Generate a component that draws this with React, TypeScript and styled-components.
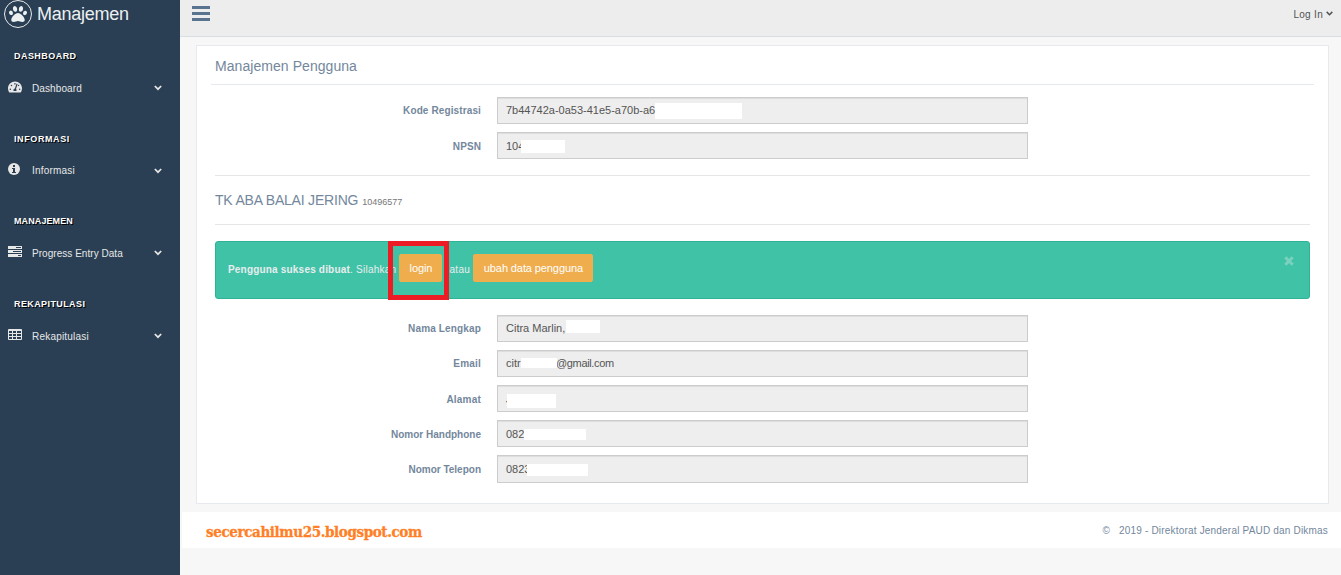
import React from "react";
import styled, { createGlobalStyle } from "styled-components";
import { FaPaw, FaTachometerAlt } from "react-icons/fa";

const GlobalStyle = createGlobalStyle`
  *, *::after { box-sizing: border-box; }
  body {
    margin: 0;
    background: #f7f7f7;
    color: #73879c;
    font-family: "Liberation Sans", Arial, sans-serif;
    font-size: 10px;
  }
`;

const Page = styled.div`
  display: flex;
  height: 575px;
  overflow: hidden;
`;

const Sidebar = styled.aside`
  flex: 0 0 180px;
  background: #2a3f54;
`;

const Brand = styled.div`
  display: flex;
  align-items: center;
  gap: 5px;
  height: 27px;
  padding-left: 4px;
  color: #ecf0f1;
  font-size: 18px;
  letter-spacing: -0.25px;
  white-space: nowrap;
`;

const BrandName = styled.span`
  padding-top: 1px;
`;

const BrandBadge = styled.span`
  display: flex;
  align-items: center;
  justify-content: center;
  width: 28px;
  height: 28px;
  border: 1px solid #eaeaea;
  border-radius: 50%;
  font-size: 18px;
`;

const Menu = styled.nav`
  padding-top: 21px;
`;

const MenuSection = styled.section`
  height: 82.7px;
`;

const MenuHeading = styled.h3<{ $tracking: number }>`
  margin: 0;
  padding: 1px 0 0 14px;
  height: 15px;
  line-height: 15px;
  font-size: 9px;
  font-weight: bold;
  color: #fff;
  letter-spacing: ${(p) => p.$tracking}px;
  text-shadow: 1px 1px #000;
`;

const MenuItem = styled.a<{ $tracking: number }>`
  display: flex;
  align-items: center;
  height: 34px;
  padding: 0 18px 0 8px;
  margin-top: 8px;
  color: #e7e7e7;
  letter-spacing: ${(p) => p.$tracking}px;
`;

const MenuIcon = styled.span`
  display: flex;
  width: 24px;
  margin-top: -3px;
  font-size: 14px;
`;

const MenuText = styled.span`
  flex: 1;
`;

const Main = styled.main`
  flex: 1;
  min-width: 0;
`;

const TopBar = styled.header`
  display: flex;
  justify-content: space-between;
  height: 37px;
  padding: 6px 8px 0 12px;
  background: #ededed;
  border-bottom: 1px solid #d9dee4;
`;

const Burger = styled.div`
  display: flex;
  flex-direction: column;
  gap: 3px;
  width: 18px;
  & > span { height: 3px; background: #5a738e; }
`;

const LoginMenu = styled.a`
  display: flex;
  align-items: center;
  gap: 3px;
  height: 16px;
  color: #515356;
  letter-spacing: 0.3px;
`;

const Panel = styled.section`
  height: 459px;
  margin: 8px 12px 0 16px;
  padding: 0 14px;
  background: #fff;
  border: 1px solid #e6e9ed;
`;

const PanelTitle = styled.h2`
  display: flex;
  align-items: center;
  height: 39px;
  margin: 0 0 12px;
  padding: 2px 4px 0;
  border-bottom: 1px solid #e6e9ed;
  font-size: 14px;
  font-weight: normal;
  letter-spacing: 0.06px;
`;

const PanelBody = styled.div`
  padding: 0 4px;
`;

const Fields = styled.div`
  display: grid;
  gap: 8px;
`;

const Field = styled.div`
  display: grid;
  grid-template-columns: 266px 531px;
  column-gap: 16px;
  align-items: start;
  height: 27px;
`;

const Label = styled.label<{ $tracking: number; $line?: number }>`
  text-align: right;
  font-weight: bold;
  line-height: ${(p) => p.$line ?? 27}px;
  letter-spacing: ${(p) => p.$tracking}px;
`;

const Value = styled.div<{ $line?: number; $height?: number }>`
  position: relative;
  height: ${(p) => p.$height ?? 27}px;
  padding-left: 8px;
  line-height: ${(p) => p.$line ?? 25}px;
  overflow: hidden;
  background: #eee;
  border: 1px solid #ccc;
  box-shadow: inset 0 1px 1px rgba(0, 0, 0, 0.075);
  color: #555;
  font-size: 11px;
  white-space: pre;
`;

const Redaction = styled.span<{ $left: number; $top: number; $width: number; $height: number }>`
  position: absolute;
  left: ${(p) => p.$left}px;
  top: ${(p) => p.$top}px;
  width: ${(p) => p.$width}px;
  height: ${(p) => p.$height}px;
  background: #fff;
`;

const Domain = styled.span`
  position: absolute;
  left: 58px;
  letter-spacing: -0.35px;
`;

const School = styled.h4`
  display: flex;
  align-items: center;
  height: 50px;
  margin: 16px 0;
  border: solid #e6e6e6;
  border-width: 1px 0;
  font-size: 14px;
  font-weight: normal;
  letter-spacing: -0.2px;
  & > small { margin: 3px 0 0 4px; font-size: 9px; color: #777; letter-spacing: 0; }
`;

const Alert = styled.div`
  display: flex;
  align-items: center;
  height: 58px;
  margin-bottom: 16px;
  padding: 0 15px 0 12px;
  background: #40c2a6;
  border: 1px solid #2fb398;
  border-radius: 3px;
  color: #e9edef;
`;

const AlertText = styled.span<{ $tracking: number }>`
  margin-top: -1px;
  letter-spacing: ${(p) => p.$tracking}px;
  white-space: pre;
`;

const Highlighted = styled.span`
  position: relative;
  margin: 0 7px 0 3px;
  &::after {
    content: "";
    position: absolute;
    left: -11px;
    top: -13px;
    width: 61px;
    height: 59px;
    border: 5px solid #ed1c24;
  }
`;

const Button = styled.button<{ $width: number }>`
  display: block;
  width: ${(p) => p.$width}px;
  height: 28px;
  padding: 0;
  border: 1px solid #f0ad4e;
  border-radius: 2px;
  background: #f0ad4e;
  color: #fff;
  font: 11px "Liberation Sans", Arial, sans-serif;
  letter-spacing: -0.1px;
`;

const AlertActions = styled.div`
  display: flex;
  align-items: center;
  margin-top: -4px;
  & > ${AlertText} { margin-top: 3px; }
`;

const CloseIcon = styled.svg`
  margin: -19px 0 0 auto;
`;

const Footer = styled.footer`
  display: flex;
  align-items: center;
  justify-content: space-between;
  height: 36px;
  margin: 8px 0 0 2px;
  padding: 0 13px 0 24px;
  background: #fff;
`;

const Blog = styled.strong`
  padding-top: 3px;
  color: #ff7f27;
  font-family: "DejaVu Serif Condensed", "DejaVu Serif", serif;
  font-size: 15px;
  line-height: 18px;
  letter-spacing: -0.38px;
  -webkit-text-stroke: 0.3px #ff7f27;
`;

const Copyright = styled.span`
  letter-spacing: 0.19px;
  white-space: pre;
`;

const Chevron = ({ width = 8 }: { width?: number }) => (
  <svg width={width} height={width * 0.75} viewBox="0 0 8 6" fill="none" stroke="currentColor" strokeWidth="1.7">
    <path d="M.8 1 4 4.2 7.2 1" />
  </svg>
);

const InfoIcon = () => (
  <svg width="12" height="12" viewBox="0 0 12 12">
    <circle cx="6" cy="6" r="6" fill="currentColor" />
    <path fill="#2a3f54" d="M5 2h2v2H5zM4 5h3v4h1v1H4V9h1V6H4z" />
  </svg>
);

const TasksIcon = () => (
  <svg width="14" height="12" viewBox="0 0 14 12">
    <path fill="currentColor" fillRule="evenodd" d="M0 0h14v3H0zM8 1v1h5V1zM0 4h14v3H0zM5 5v1h8V5zM0 8h14v3H0zM10 9v1h3V9z" />
  </svg>
);

const TableIcon = () => (
  <svg width="14" height="12" viewBox="0 0 14 12">
    <path fill="currentColor" fillRule="evenodd" d="M1 0h12q1 0 1 1v9q0 1-1 1H1q-1 0-1-1V1q0-1 1-1zM1 2v2h3V2zM5 2v2h3V2zM9 2v2h4V2zM1 5v2h3V5zM5 5v2h3V5zM9 5v2h4V5zM1 8v2h3V8zM5 8v2h3V8zM9 8v2h4V8z" />
  </svg>
);

const sections = [
  { heading: "DASHBOARD", item: "Dashboard", icon: <FaTachometerAlt />, ht: 0.45, it: 0.1 },
  { heading: "INFORMASI", item: "Informasi", icon: <InfoIcon />, ht: 0.6, it: 0.2 },
  { heading: "MANAJEMEN", item: "Progress Entry Data", icon: <TasksIcon />, ht: 0.1, it: 0.04 },
  { heading: "REKAPITULASI", item: "Rekapitulasi", icon: <TableIcon />, ht: 0.4, it: 0.2 },
];

export default function App() {
  return (
    <>
      <GlobalStyle />
      <Page>
        <Sidebar>
          <Brand>
            <BrandBadge><FaPaw /></BrandBadge>
            <BrandName>Manajemen</BrandName>
          </Brand>
          <Menu>
            {sections.map((s) => (
              <MenuSection key={s.heading}>
                <MenuHeading $tracking={s.ht}>{s.heading}</MenuHeading>
                <MenuItem $tracking={s.it}>
                  <MenuIcon>{s.icon}</MenuIcon>
                  <MenuText>{s.item}</MenuText>
                  <Chevron />
                </MenuItem>
              </MenuSection>
            ))}
          </Menu>
        </Sidebar>
        <Main>
          <TopBar>
            <Burger><span /><span /><span /></Burger>
            <LoginMenu>Log In <Chevron width={7} /></LoginMenu>
          </TopBar>
          <Panel>
            <PanelTitle>Manajemen Pengguna</PanelTitle>
            <PanelBody>
              <Fields>
                <Field>
                  <Label $tracking={0.12}>Kode Registrasi</Label>
                  <Value>7b44742a-0a53-41e5-a70b-a63<Redaction $left={157} $top={5} $width={87} $height={16} /></Value>
                </Field>
                <Field>
                  <Label $tracking={0.1} $line={29}>NPSN</Label>
                  <Value $line={27}>104<Redaction $left={23} $top={7} $width={44} $height={13} /></Value>
                </Field>
              </Fields>
              <School>TK ABA BALAI JERING <small>10496577</small></School>
              <Alert>
                <AlertText as="strong" $tracking={0.19}>Pengguna sukses dibuat</AlertText>
                <AlertText $tracking={0.25}>. Silahkan</AlertText>
                <AlertActions>
                  <Highlighted><Button $width={43}>login</Button></Highlighted>
                  <AlertText $tracking={0.35}>atau </AlertText>
                  <Button $width={120}>ubah data pengguna</Button>
                </AlertActions>
                <CloseIcon width="10" height="10" viewBox="0 0 10 10" stroke="#79d1bf" strokeWidth="3">
                  <path d="M1.300 1.300 8.700 8.700M8.700 1.300 1.300 8.700" />
                </CloseIcon>
              </Alert>
              <Fields>
                <Field>
                  <Label $tracking={0.15}>Nama Lengkap</Label>
                  <Value>Citra Marlin, .<Redaction $left={68} $top={4} $width={34} $height={13} /></Value>
                </Field>
                <Field>
                  <Label $tracking={0.2}>Email</Label>
                  <Value>citr<Domain>@gmail.com</Domain><Redaction $left={23} $top={7} $width={36} $height={10} /></Value>
                </Field>
                <Field>
                  <Label $tracking={0.2} $line={29}>Alamat</Label>
                  <Value $line={27}>J<Redaction $left={9} $top={8} $width={49} $height={14} /></Value>
                </Field>
                <Field>
                  <Label $tracking={0} $line={29}>Nomor Handphone</Label>
                  <Value $line={27}>082<Redaction $left={26} $top={8} $width={62} $height={11} /></Value>
                </Field>
                <Field>
                  <Label $tracking={0} $line={29}>Nomor Telepon</Label>
                  <Value $line={27} $height={28}>0823<Redaction $left={29} $top={8} $width={61} $height={12} /></Value>
                </Field>
              </Fields>
            </PanelBody>
          </Panel>
          <Footer>
            <Blog>secercahilmu25.blogspot.com</Blog>
            <Copyright>©   2019 - Direktorat Jenderal PAUD dan Dikmas</Copyright>
          </Footer>
        </Main>
      </Page>
    </>
  );
}
